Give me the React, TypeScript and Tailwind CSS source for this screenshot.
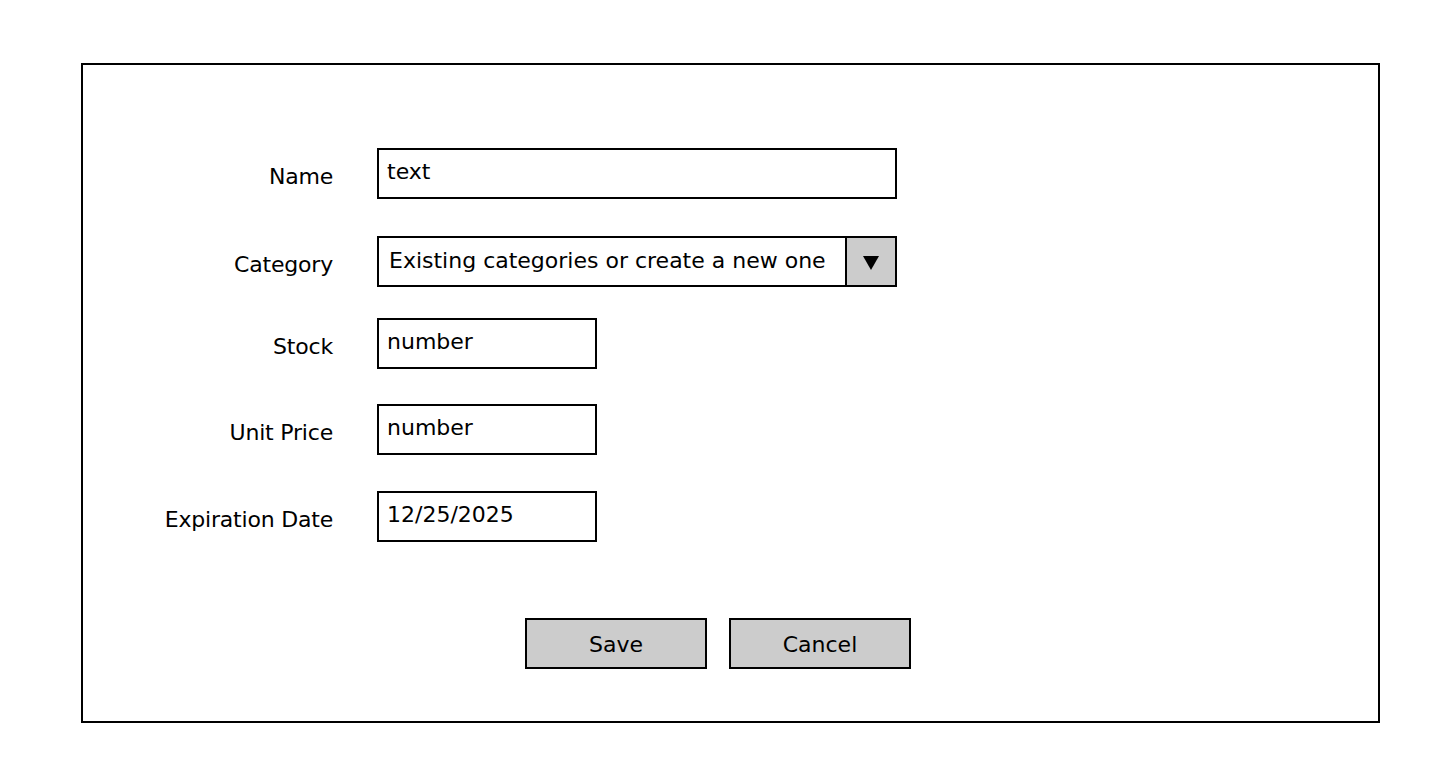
const font = "font-['DejaVu_Sans',sans-serif]"

function Field({ label, children, className }: { label: string; children: React.ReactNode; className: string }) {
  return (
    <div className={`flex items-center ${className}`}>
      <div className="w-[250px] shrink-0 pt-[7px] text-right text-[22px] tracking-[-0.2px] leading-none text-black">{label}</div>
      <div className="ml-[44px]">{children}</div>
    </div>
  )
}

function TextBox({ value, width }: { value: string; width: string }) {
  return (
    <div className={`${width} h-[51px] border-2 border-black bg-white flex items-center pl-[8px] pb-[4px] text-[22px] leading-none text-black`}>
      {value}
    </div>
  )
}

export default function App() {
  return (
    <div className={`min-h-screen bg-white pt-[63px] pl-[81px] ${font}`}>
      <div className="w-[1299px] h-[660px] border-2 border-black flex flex-col pt-[83px]">
        <Field label="Name" className="">
          <TextBox value="text" width="w-[520px]" />
        </Field>

        <Field label="Category" className="mt-[37px]">
          <div className="w-[520px] h-[51px] border-2 border-black bg-white flex">
            <div className="flex-1 flex items-center pl-[10px] pb-[1px] text-[22px] leading-none text-black whitespace-nowrap">
              Existing categories or create a new one
            </div>
            <div className="w-[50px] shrink-0 border-l-2 border-black bg-[#cccccc] flex items-center justify-center pt-[2px]">
              <svg width="18" height="16" viewBox="0 0 18 16">
                <path d="M1 1 L17 1 L9 15 Z" fill="#000" />
              </svg>
            </div>
          </div>
        </Field>

        <Field label="Stock" className="mt-[31px]">
          <TextBox value="number" width="w-[220px]" />
        </Field>

        <Field label="Unit Price" className="mt-[35px]">
          <TextBox value="number" width="w-[220px]" />
        </Field>

        <Field label="Expiration Date" className="mt-[36px]">
          <TextBox value="12/25/2025" width="w-[220px]" />
        </Field>

        <div className="mt-[76px] ml-[442px] flex gap-[22px]">
          <button className="w-[182px] h-[51px] border-2 border-black bg-[#cccccc] text-[22px] leading-none text-black pt-[2px]">
            Save
          </button>
          <button className="w-[182px] h-[51px] border-2 border-black bg-[#cccccc] text-[22px] leading-none text-black pt-[2px]">
            Cancel
          </button>
        </div>
      </div>
    </div>
  )
}
